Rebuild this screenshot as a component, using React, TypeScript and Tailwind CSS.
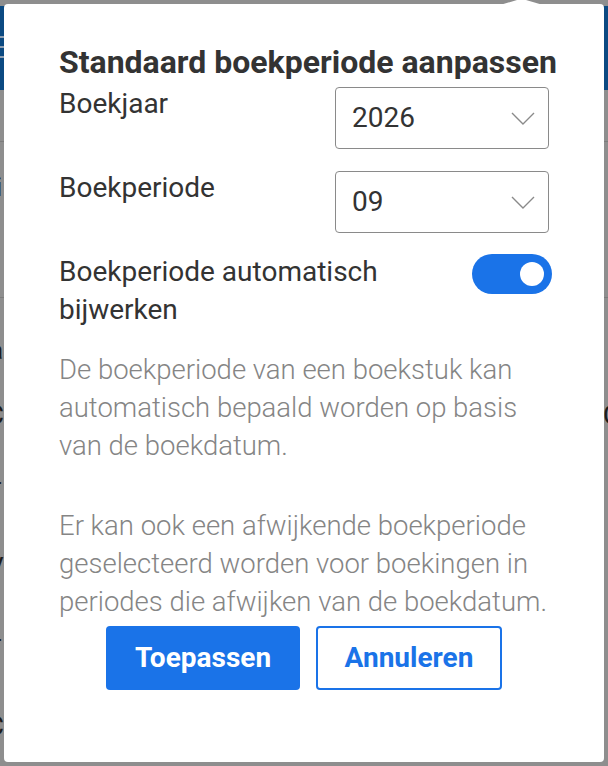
import React, { useState } from 'react';

const Chevron: React.FC = () => (
  <svg width="24" height="13" viewBox="0 0 24 13" fill="none">
    <polyline points="1,1 12,12 23,1" stroke="#8a8a8a" strokeWidth="1.4" />
  </svg>
);

interface SelectBoxProps {
  value: string;
}

const SelectBox: React.FC<SelectBoxProps> = ({ value }) => (
  <div className="mr-[3px] mt-[2px] flex h-[62px] w-[214px] shrink-0 items-center justify-between rounded-[4px] border-[1.5px] border-[#8a8a8a] pl-[16px] pr-[13px]">
    <span className="text-[28px] leading-none text-[#333333]">{value}</span>
    <Chevron />
  </div>
);

const Toggle: React.FC<{ on: boolean; onChange: () => void }> = ({ on, onChange }) => (
  <button
    type="button"
    onClick={onChange}
    className={`mt-[1px] flex h-[40px] w-[80px] shrink-0 items-center rounded-full px-[8px] ${on ? 'justify-end bg-[#1a73e8]' : 'justify-start bg-[#bdbdbd]'}`}
  >
    <span className="h-[24px] w-[24px] rounded-full bg-white" />
  </button>
);

// page behind the overlay, only its edges peek out
const Backdrop: React.FC = () => (
  <div className="absolute inset-0 flex flex-col pt-[6px] text-[26px] leading-[38px] text-[#1c1c1c]">
    <div className="flex h-[84px] flex-col gap-[8px] bg-[#0c4a82] pt-[30px]">
      <div className="h-[2px] w-[4px] bg-[#8fa0b3]" />
      <div className="h-[2px] w-[4px] bg-[#8fa0b3]" />
      <div className="h-[2px] w-[4px] bg-[#8fa0b3]" />
    </div>
    <div className="h-[52px] border-b border-[#7c7c7c]" />
    <div className="h-[156px] border-b border-[#7c7c7c] pt-[26px]">
      <span className="-ml-[4px]">i</span>
    </div>
    <div className="flex flex-col pt-[33px]">
      <span className="-ml-[11px]">a</span>
      <div className="mt-[27px] flex justify-between">
        <span className="-ml-[13px]">C</span>
        <span className="-mr-[12px]">C</span>
      </div>
      <span className="-ml-[14px] mt-[39px]">T</span>
      <span className="-ml-[13px] mt-[37px]">V</span>
      <span className="-ml-[14px] mt-[44px]">T</span>
      <span className="-ml-[13px] mt-[39px]">C</span>
    </div>
  </div>
);

const App: React.FC = () => {
  const [autoUpdate, setAutoUpdate] = useState(true);

  return (
    <div
      className="relative h-[766px] w-[608px] overflow-hidden bg-[#8e8e8e] pl-[4px] pt-[4px]"
      style={{ fontFamily: 'Roboto, "Noto Sans", sans-serif' }}
    >
      <Backdrop />

      <div className="relative h-[758px] w-[600px] rounded-[4px] bg-white pl-[55px] pr-[52px] pt-[40px]">
        <svg className="absolute left-[496px] top-[-4px]" width="43" height="5" viewBox="0 0 43 5">
          <polygon points="0,5 17,0 26,0 43,5" fill="#ffffff" />
        </svg>

        <h2 className="whitespace-nowrap text-[32px] font-bold leading-[36px] text-[#333333]">
          Standaard boekperiode aanpassen
        </h2>

        <div className="mt-[5px] flex items-start justify-between">
          <span className="text-[28px] leading-[38px] text-[#333333]">Boekjaar</span>
          <SelectBox value="2026" />
        </div>

        <div className="mt-[20px] flex items-start justify-between">
          <span className="text-[28px] leading-[38px] text-[#333333]">Boekperiode</span>
          <SelectBox value="09" />
        </div>

        <div className="mt-[20px] flex items-start justify-between">
          <span className="text-[28px] leading-[38px] text-[#333333]">
            Boekperiode automatisch
            <br />
            bijwerken
          </span>
          <Toggle on={autoUpdate} onChange={() => setAutoUpdate(!autoUpdate)} />
        </div>

        <p
          className="mt-[22px] whitespace-nowrap text-[27.5px] font-light leading-[38px] text-[#858585]"
          style={{ fontFamily: '"Roboto Light", Roboto, sans-serif' }}
        >
          De boekperiode van een boekstuk kan
          <br />
          automatisch bepaald worden op basis
          <br />
          van de boekdatum.
        </p>

        <p
          className="mt-[42px] whitespace-nowrap text-[27.5px] font-light leading-[38px] text-[#858585]"
          style={{ fontFamily: '"Roboto Light", Roboto, sans-serif' }}
        >
          Er kan ook een afwijkende boekperiode
          <br />
          geselecteerd worden voor boekingen in
          <br />
          periodes die afwijken van de boekdatum.
        </p>

        <div className="ml-[47px] mt-[5px] flex gap-4">
          <button
            type="button"
            className="h-[64px] w-[194px] rounded-[4px] bg-[#1a73e8] text-[28px] font-bold text-white"
          >
            Toepassen
          </button>
          <button
            type="button"
            className="h-[64px] w-[186px] rounded-[4px] border-2 border-[#1a73e8] bg-white text-[28px] font-bold text-[#1a73e8]"
          >
            Annuleren
          </button>
        </div>
      </div>
    </div>
  );
};

export default App;
